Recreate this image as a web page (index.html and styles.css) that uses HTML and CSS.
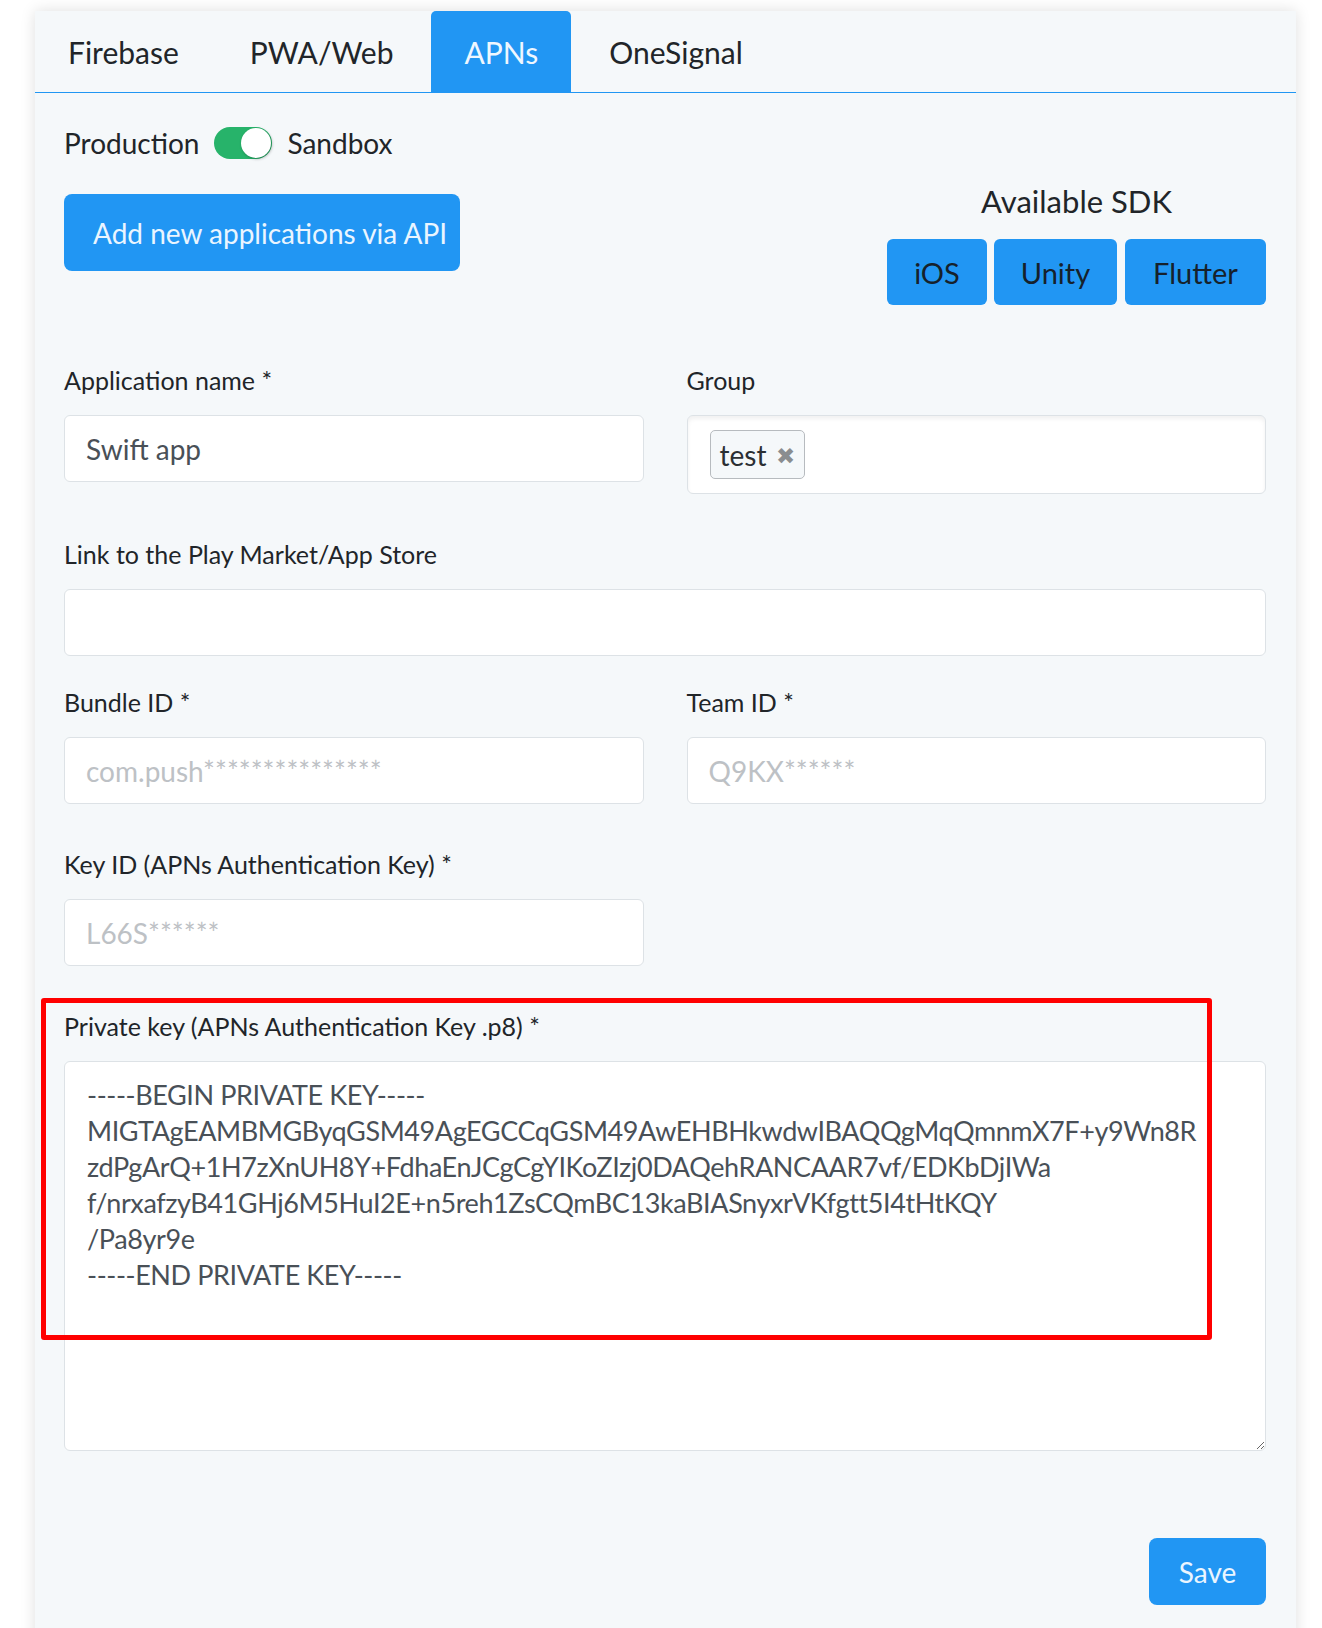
FILE: index.html
```html
<!DOCTYPE html>
<html lang="en">
<head>
    <meta charset="UTF-8">
    <title>Push applications - APNs</title>
    <link rel="stylesheet" href="styles.css">
</head>
<body>

    <div class="card">
        <ul class="tabs">
            <li class="tab">Firebase</li>
            <li class="tab">PWA/Web</li>
            <li class="tab active">APNs</li>
            <li class="tab">OneSignal</li>
        </ul>

        <div class="card-body">
            <div class="env-switch">
                <span>Production</span>
                <span class="toggle"><span class="knob"></span></span>
                <span>Sandbox</span>
            </div>

            <div class="actions-row">
                <button class="btn btn-add" type="button">Add new applications via API</button>
                <div class="sdk">
                    <div class="sdk-title">Available SDK</div>
                    <div class="sdk-buttons">
                        <button class="btn btn-sdk sdk-ios" type="button">iOS</button>
                        <button class="btn btn-sdk sdk-unity" type="button">Unity</button>
                        <button class="btn btn-sdk sdk-flutter" type="button">Flutter</button>
                    </div>
                </div>
            </div>

            <form class="app-form">
                <div class="form-row">
                    <div class="form-group">
                        <label>Application name *</label>
                        <input class="field" type="text" value="Swift app">
                    </div>
                    <div class="form-group">
                        <label>Group</label>
                        <div class="field tag-field">
                            <span class="tag">test <span class="tag-remove">&#10006;</span></span>
                        </div>
                    </div>
                </div>

                <div class="form-group group-link">
                    <label>Link to the Play Market/App Store</label>
                    <input class="field" type="text">
                </div>

                <div class="form-row">
                    <div class="form-group">
                        <label>Bundle ID *</label>
                        <input class="field" type="text" placeholder="com.push***************">
                    </div>
                    <div class="form-group">
                        <label>Team ID *</label>
                        <input class="field" type="text" placeholder="Q9KX******">
                    </div>
                </div>

                <div class="form-row">
                    <div class="form-group">
                        <label>Key ID (APNs Authentication Key) *</label>
                        <input class="field" type="text" placeholder="L66S******">
                    </div>
                </div>

                <div class="form-group group-key">
                    <div class="highlight"></div>
                    <label>Private key (APNs Authentication Key .p8) *</label>
                    <textarea class="field key-area" spellcheck="false">-----BEGIN PRIVATE KEY-----
MIGTAgEAMBMGByqGSM49AgEGCCqGSM49AwEHBHkwdwIBAQQgMqQmnmX7F+y9Wn8R
zdPgArQ+1H7zXnUH8Y+FdhaEnJCgCgYIKoZIzj0DAQehRANCAAR7vf/EDKbDjIWa
f/nrxafzyB41GHj6M5HuI2E+n5reh1ZsCQmBC13kaBIASnyxrVKfgtt5I4tHtKQY
/Pa8yr9e
-----END PRIVATE KEY-----</textarea>
                </div>

                <div class="form-footer">
                    <button class="btn btn-save" type="button">Save</button>
                </div>
            </form>
        </div>
    </div>

</body>
</html>
```

FILE: styles.css
```css
body{
    margin: 0;
    background: #fff;
    font-family: Lato, "Liberation Sans", sans-serif;
    color: #212529;
}

.card{
    margin: 11px 0 0 35px;
    width: 1261px;
    background: #f5f8fa;
    box-shadow: 0 0 14px rgba(0,0,0,0.13);
    padding-bottom: 40px;
}

/* tabs */
.tabs{
    list-style: none;
    margin: 0;
    padding: 0;
    display: flex;
    gap: 5px;
    height: 81px;
    border-bottom: 1px solid #2196f3;
}
.tab{
    display: flex;
    align-items: center;
    padding: 0 33px;
    font-size: 30px;
    color: #212529;
    border-radius: 5px 5px 0 0;
}
.tab.active{
    background: #2196f3;
    color: #eef7ff;
}

.card-body{
    padding: 0 30px 0 29px;
}

/* production / sandbox */
.env-switch{
    margin-top: 34px;
    display: flex;
    align-items: center;
    gap: 15px;
    font-size: 28px;
    height: 32px;
}
.toggle{
    position: relative;
    width: 58px;
    height: 32px;
    border-radius: 16px;
    background: #27b36a;
}
.knob{
    position: absolute;
    right: 1px;
    top: 1px;
    width: 30px;
    height: 30px;
    border-radius: 50%;
    background: #fff;
    box-shadow: 1px 1px 3px rgba(0,0,0,0.3);
}

/* buttons */
.btn{
    font: inherit;
    border: none;
    background: #2196f3;
    cursor: pointer;
}
.actions-row{
    margin-top: 22px;
    display: flex;
    justify-content: space-between;
    align-items: flex-start;
}
.btn-add{
    margin-top: 13px;
    width: 396px;
    height: 77px;
    padding: 0 0 0 29px;
    text-align: left;
    border-radius: 8px;
    font-size: 28px;
    color: #eaf5ff;
}
.sdk{
    display: flex;
    flex-direction: column;
    align-items: center;
}
.sdk-title{
    font-size: 31px;
    line-height: 40px;
}
.sdk-buttons{
    margin-top: 18px;
    display: flex;
    gap: 7px;
}
.btn-sdk{
    height: 66px;
    padding: 0;
    border-radius: 6px;
    font-size: 29px;
    color: #16212b;
}
.sdk-ios{ width: 100px; }
.sdk-unity{ width: 123px; }
.sdk-flutter{ width: 141px; margin-left: 1px; }

/* form */
.app-form{
    margin-top: 56px;
}
.form-row{
    display: grid;
    grid-template-columns: 1fr 1fr;
    column-gap: 43px;
}
.form-group{
    display: flex;
    flex-direction: column;
    margin-bottom: 41px;
}
.form-group.group-link{
    margin-bottom: 27px;
}
.form-group label{
    font-size: 25px;
    line-height: 38px;
    margin-bottom: 16px;
}
.field{
    box-sizing: border-box;
    height: 67px;
    padding: 0 21px;
    border: 1px solid #dde2e6;
    border-radius: 6px;
    background: #fff;
    font-family: inherit;
    font-size: 28px;
    color: #495057;
    outline: none;
}
.field::placeholder{
    color: #bdc1c5;
}
.tag-field{
    height: 79px;
    display: flex;
    align-items: flex-start;
    padding: 14px 22px;
    box-shadow: inset 0 3px 4px rgba(0,0,0,0.06);
}
.tag{
    box-sizing: border-box;
    height: 49px;
    display: flex;
    align-items: center;
    gap: 10px;
    padding: 0 9px;
    border: 1px solid #b7bbbf;
    border-radius: 5px;
    background: #f5f8fa;
    font-size: 28px;
    color: #2b2f33;
}
.tag-remove{
    font-size: 23px;
    color: #8a8d90;
}

.group-key{
    position: relative;
    margin-bottom: 0;
}
.key-area{
    height: 390px;
    padding: 15px 22px;
    font-size: 27px;
    line-height: 36px;
    letter-spacing: -0.4px;
    resize: vertical;
}
.highlight{
    position: absolute;
    left: -23px;
    top: -9px;
    width: 1171px;
    height: 342px;
    box-sizing: border-box;
    border: 5px solid #ff0000;
    border-radius: 3px;
    pointer-events: none;
    z-index: 2;
}

.form-footer{
    display: flex;
    justify-content: flex-end;
    margin-top: 87px;
}
.btn-save{
    height: 67px;
    width: 117px;
    border-radius: 8px;
    font-size: 28px;
    color: #eaf5ff;
}
```
